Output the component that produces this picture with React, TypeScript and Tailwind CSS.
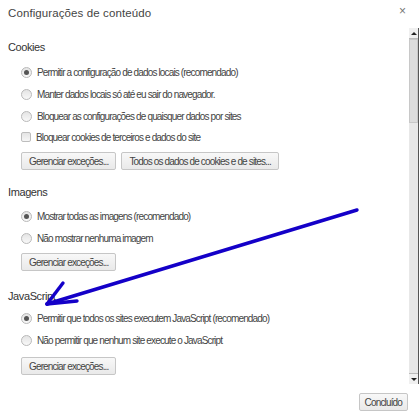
import React from "react";

const font = { fontFamily: '"Liberation Sans", Arial, sans-serif' };

function Radio({ checked }: { checked?: boolean }) {
  return (
    <span className="w-[11px] h-[11px] rounded-full border border-[#b9b9b9] bg-gradient-to-b from-[#e4e4e4] to-[#f8f8f8] flex items-center justify-center shrink-0">
      {checked && <span className="w-[5px] h-[5px] rounded-full bg-[#555]" />}
    </span>
  );
}

function Check() {
  return (
    <span className="w-[10px] h-[10px] rounded-[2px] border border-[#bdbdbd] bg-gradient-to-b from-[#e4e4e4] to-[#f6f6f6] shrink-0" />
  );
}

function Row({ children, checked, box, h = "h-[22px]" }: { children: React.ReactNode; checked?: boolean; box?: boolean; h?: string }) {
  return (
    <div className={`${h} flex items-center gap-[5px] pl-[21px]`}>
      {box ? <Check /> : <Radio checked={checked} />}
      <span className="text-[10px] tracking-[-0.85px] text-[#444] whitespace-nowrap">{children}</span>
    </div>
  );
}

function Btn({ children }: { children: React.ReactNode }) {
  return (
    <span className="h-[18px] px-[7px] flex items-center rounded-[2px] border border-[#c6c6c6] bg-gradient-to-b from-[#f8f8f8] to-[#e9e9e9] text-[10px] tracking-[-0.85px] text-[#444] whitespace-nowrap">
      {children}
    </span>
  );
}

function Heading({ children, className }: { children: React.ReactNode; className: string }) {
  return <div className={`h-[16px] flex items-center pl-[8px] text-[11px] tracking-[-0.4px] text-[#333] ${className}`}>{children}</div>;
}

export default function App() {
  return (
    <div className="w-[420px] h-[420px] bg-white relative overflow-hidden flex flex-col" style={font}>
      <div className="h-[28px] flex items-start justify-between">
        <div className="mt-[5px] ml-[8px] text-[11.5px] tracking-[0.1px] text-[#444]">Configurações de conteúdo</div>
        <div className="mt-[2px] mr-[14px] text-[12px] text-[#777]">×</div>
      </div>
      <div className="flex h-[356px]">
        <div className="flex-1 flex flex-col">
          <Heading className="mt-[11px]">Cookies</Heading>
          <div className="mt-[6px]">
            <Row checked>Permitir a configuração de dados locais (recomendado)</Row>
            <Row>Manter dados locais só até eu sair do navegador.</Row>
            <Row>Bloquear as configurações de quaisquer dados por sites</Row>
            <Row box h="h-[20px]">Bloquear cookies de terceiros e dados do site</Row>
          </div>
          <div className="mt-[5px] pl-[21px] flex gap-[5px]">
            <Btn>Gerenciar exceções...</Btn>
            <Btn>Todos os dados de cookies e de sites...</Btn>
          </div>
          <Heading className="mt-[14px]">Imagens</Heading>
          <div className="mt-[5px]">
            <Row checked>Mostrar todas as imagens (recomendado)</Row>
            <Row>Não mostrar nenhuma imagem</Row>
          </div>
          <div className="mt-[4px] pl-[21px] flex">
            <Btn>Gerenciar exceções...</Btn>
          </div>
          <Heading className="mt-[17px]">JavaScript</Heading>
          <div className="mt-[3px]">
            <Row checked>Permitir que todos os sites executem JavaScript (recomendado)</Row>
            <Row>Não permitir que nenhum site execute o JavaScript</Row>
          </div>
          <div className="mt-[6px] pl-[21px] flex">
            <Btn>Gerenciar exceções...</Btn>
          </div>
        </div>
        <div className="w-[10px] mr-[1px] flex flex-col bg-[#e8e8e8] border-r border-[#555]">
          <div className="h-[11px] flex items-center justify-center bg-[#f0f0f0] border-b border-[#bbb]">
            <span className="w-0 h-0 border-l-[3px] border-r-[3px] border-b-[3px] border-l-transparent border-r-transparent border-b-[#222]" />
          </div>
          <div className="h-[84px] bg-[#dcdcdc] border border-[#c8c8c8]" />
          <div className="flex-1" />
          <div className="h-[11px] flex items-center justify-center bg-[#f0f0f0] border-t border-[#bbb]">
            <span className="w-0 h-0 border-l-[3px] border-r-[3px] border-t-[3px] border-l-transparent border-r-transparent border-t-[#222]" />
          </div>
        </div>
      </div>
      <div className="flex justify-end mt-[9px] pr-[12px]">
        <span className="h-[18px] px-[5px] flex items-center rounded-[2px] border border-[#c6c6c6] bg-gradient-to-b from-[#f8f8f8] to-[#e9e9e9] text-[10px] tracking-[-0.85px] text-[#444]">
          Concluído
        </span>
      </div>
      <svg className="absolute left-0 top-0 pointer-events-none" width="420" height="420">
        <g stroke="#1400c8" strokeWidth="3.4" strokeLinecap="round" fill="none">
          <line x1="357" y1="210" x2="47" y2="304" />
          <line x1="47" y1="304" x2="63" y2="283" />
          <line x1="47" y1="304" x2="77" y2="301" />
        </g>
      </svg>
    </div>
  );
}
